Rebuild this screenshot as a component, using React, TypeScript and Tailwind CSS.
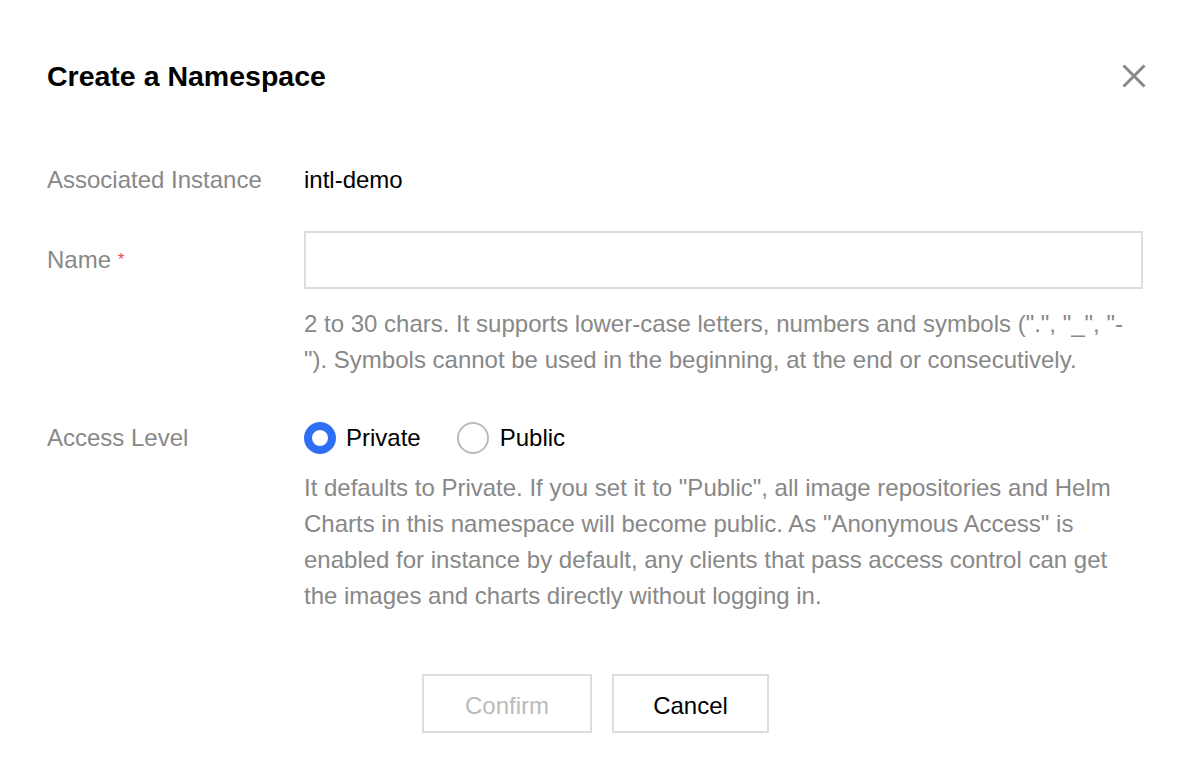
import React, { useState } from 'react';

const App: React.FC = () => {
    const [nombre, setNombre] = useState('');
    const [acceso, setAcceso] = useState<'private' | 'public'>('private');

    return (
        <div
            className="min-h-screen w-full bg-white px-[47px] pt-[56px] text-[24px] text-black"
            style={{ fontFamily: '"Liberation Sans", Arial, Helvetica, sans-serif' }}
        >
            {/* Cabecera */}
            <div className="flex items-center justify-between">
                <h2 className="text-[28.5px] font-bold leading-[40px]">Create a Namespace</h2>
                <button className="mr-[3px] flex h-[24px] w-[24px] items-center justify-center text-[#888]">
                    <svg width="24" height="24" viewBox="0 0 24 24" fill="none">
                        <path d="M1.5 1.5 L22.5 22.5 M22.5 1.5 L1.5 22.5" stroke="currentColor" strokeWidth="3" />
                    </svg>
                </button>
            </div>

            {/* Formulario */}
            <div className="mt-[66px] flex flex-col">
                <div className="flex leading-[36px]">
                    <div className="w-[257px] shrink-0 text-[#888]">Associated Instance</div>
                    <div>intl-demo</div>
                </div>

                <div className="mt-[33px] flex">
                    <div className="flex h-[58px] w-[257px] shrink-0 items-center text-[#888]">
                        Name
                        <span className="ml-[7px] text-[16px] text-[#e54545]">*</span>
                    </div>
                    <div className="w-[839px]">
                        <input
                            value={nombre}
                            onChange={(e) => setNombre(e.target.value)}
                            className="h-[58px] w-full border-2 border-[#dddddd] px-4 text-[24px] outline-none"
                        />
                        <p className="mt-[17px] leading-[36px] text-[#888]">
                            2 to 30 chars. It supports lower-case letters, numbers and symbols (".", "_", "-
                            <br />
                            "). Symbols cannot be used in the beginning, at the end or consecutively.
                        </p>
                    </div>
                </div>

                <div className="mt-[42px] flex">
                    <div className="w-[257px] shrink-0 leading-[36px] text-[#888]">Access Level</div>
                    <div className="w-[839px]">
                        <div className="flex h-[36px] items-center">
                            <label className="flex cursor-pointer items-center" onClick={() => setAcceso('private')}>
                                <span
                                    className={
                                        acceso === 'private'
                                            ? 'h-[32px] w-[32px] rounded-full border-[8.5px] border-[#2e6ff5] bg-white'
                                            : 'h-[32px] w-[32px] rounded-full border-2 border-[#bbbbbb] bg-white'
                                    }
                                />
                                <span className="ml-[10px]">Private</span>
                            </label>
                            <label className="ml-[36px] flex cursor-pointer items-center" onClick={() => setAcceso('public')}>
                                <span
                                    className={
                                        acceso === 'public'
                                            ? 'h-[32px] w-[32px] rounded-full border-[8.5px] border-[#2e6ff5] bg-white'
                                            : 'h-[32px] w-[32px] rounded-full border-2 border-[#bbbbbb] bg-white'
                                    }
                                />
                                <span className="ml-[11px]">Public</span>
                            </label>
                        </div>
                        <p className="mt-[14px] leading-[36px] text-[#888]">
                            It defaults to Private. If you set it to "Public", all image repositories and Helm Charts in
                            this namespace will become public. As "Anonymous Access" is enabled for instance by default,
                            any clients that pass access control can get the images and charts directly without logging
                            in.
                        </p>
                    </div>
                </div>
            </div>

            {/* Botones */}
            <div className="mt-[60px] flex justify-center gap-[20px] pr-[5px]">
                <button
                    disabled
                    className="h-[59px] w-[170px] border-2 border-[#dddddd] bg-white pt-[4px] text-[24px] text-[#bbbbbb]"
                >
                    Confirm
                </button>
                <button className="h-[59px] w-[157px] border-2 border-[#dddddd] bg-white pt-[4px] text-[24px] text-black">
                    Cancel
                </button>
            </div>
        </div>
    );
};

export default App;
